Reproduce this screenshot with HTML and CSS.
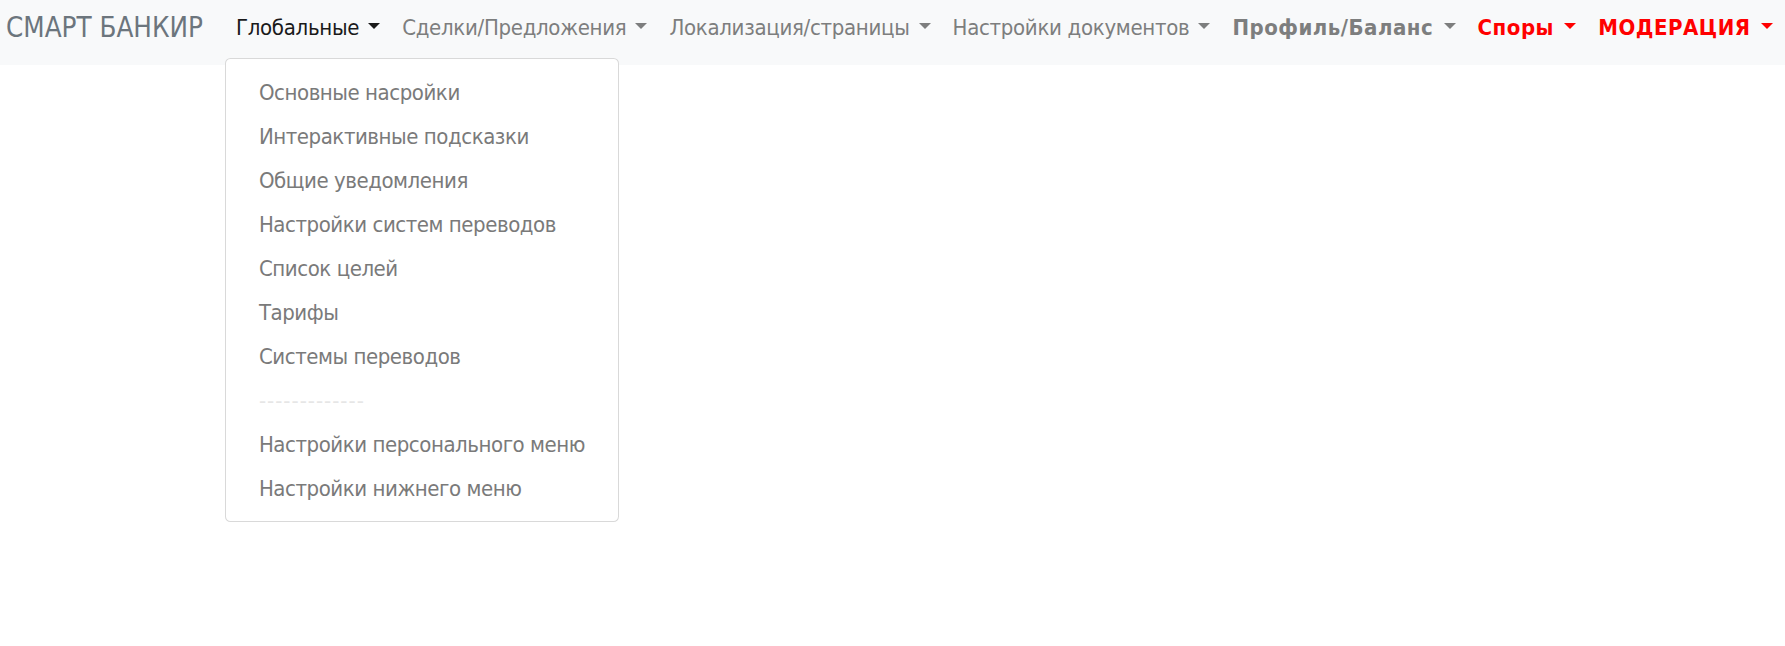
FILE: index.html
```html
<!DOCTYPE html>
<html lang="ru">
<head>
<meta charset="utf-8">
<title>СМАРТ БАНКИР</title>
<link rel="stylesheet" href="styles.css">
</head>
<body>
<nav class="navbar">
  <a class="brand" href="#">СМАРТ БАНКИР</a>
  <ul class="nav">
    <li class="nav-item dropdown">
      <a class="nav-link active" href="#">Глобальные <span class="caret"></span></a>
      <div class="dropdown-menu">
        <a class="dropdown-item" href="#">Основные насройки</a>
        <a class="dropdown-item" href="#">Интерактивные подсказки</a>
        <a class="dropdown-item" href="#">Общие уведомления</a>
        <a class="dropdown-item" href="#">Настройки систем переводов</a>
        <a class="dropdown-item" href="#">Список целей</a>
        <a class="dropdown-item" href="#">Тарифы</a>
        <a class="dropdown-item" href="#">Системы переводов</a>
        <span class="dropdown-item sep">-------------</span>
        <a class="dropdown-item" href="#">Настройки персонального меню</a>
        <a class="dropdown-item" href="#">Настройки нижнего меню</a>
      </div>
    </li>
    <li class="nav-item"><a class="nav-link" href="#">Сделки/Предложения <span class="caret"></span></a></li>
    <li class="nav-item"><a class="nav-link" href="#">Локализация/страницы <span class="caret"></span></a></li>
    <li class="nav-item"><a class="nav-link" href="#">Настройки документов <span class="caret"></span></a></li>
    <li class="nav-item"><a class="nav-link bold" href="#">Профиль/Баланс <span class="caret"></span></a></li>
    <li class="nav-item"><a class="nav-link bold red" href="#">Споры <span class="caret"></span></a></li>
    <li class="nav-item"><a class="nav-link bold red" href="#">МОДЕРАЦИЯ <span class="caret"></span></a></li>
  </ul>
</nav>
</body>
</html>
```
FILE: styles.css
```css
html, body {
  margin: 0;
  padding: 0;
  background: #fff;
  min-height: 100%;
  height: 100%;
}
body {
  font-family: "DejaVu Sans Condensed", "DejaVu Sans", sans-serif;
  font-size: 22px;
  line-height: 1.5;
  color: #212529;
}
a { text-decoration: none; }

.navbar {
  display: flex;
  align-items: flex-start;
  background: #f8f9fa;
  height: 65px;
  box-sizing: border-box;
  padding: 0 0 10px 6px;
}
.brand {
  font-size: 27.5px;
  line-height: 41.25px;
  padding: 6.875px 0;
  margin-right: 22px;
  color: #6c757d;
  white-space: nowrap;
}
.nav {
  display: flex;
  list-style: none;
  margin: 0;
  padding: 0;
}
.nav-item { position: relative; }
.nav-link {
  display: block;
  padding: 11px;
  line-height: 33px;
  color: #7d7e7e;
  white-space: nowrap;
  letter-spacing: -0.3px;
}
.nav-link.active { color: #1a1a1a; }
.nav-link.bold { font-weight: bold; letter-spacing: 0.5px; }
.nav-link.red { color: #ff0000; }
.caret {
  display: inline-block;
  margin-left: 3px;
  vertical-align: 5.6px;
  border-top: 6.6px solid;
  border-left: 6.6px solid transparent;
  border-right: 6.6px solid transparent;
}
.dropdown-menu {
  position: absolute;
  top: 100%;
  left: 0;
  margin-top: 3px;
  padding: 11px 0;
  background: #fff;
  border: 1px solid rgba(0,0,0,.15);
  border-radius: 5.5px;
  display: flex;
  flex-direction: column;
  min-width: 220px;
  z-index: 10;
}
.dropdown-item {
  display: block;
  padding: 5.5px 33px;
  line-height: 33px;
  color: #7a7a7a;
  white-space: nowrap;
  letter-spacing: -0.45px;
}
.dropdown-item.sep { color: #e6e6e6; letter-spacing: 1px; }
```
